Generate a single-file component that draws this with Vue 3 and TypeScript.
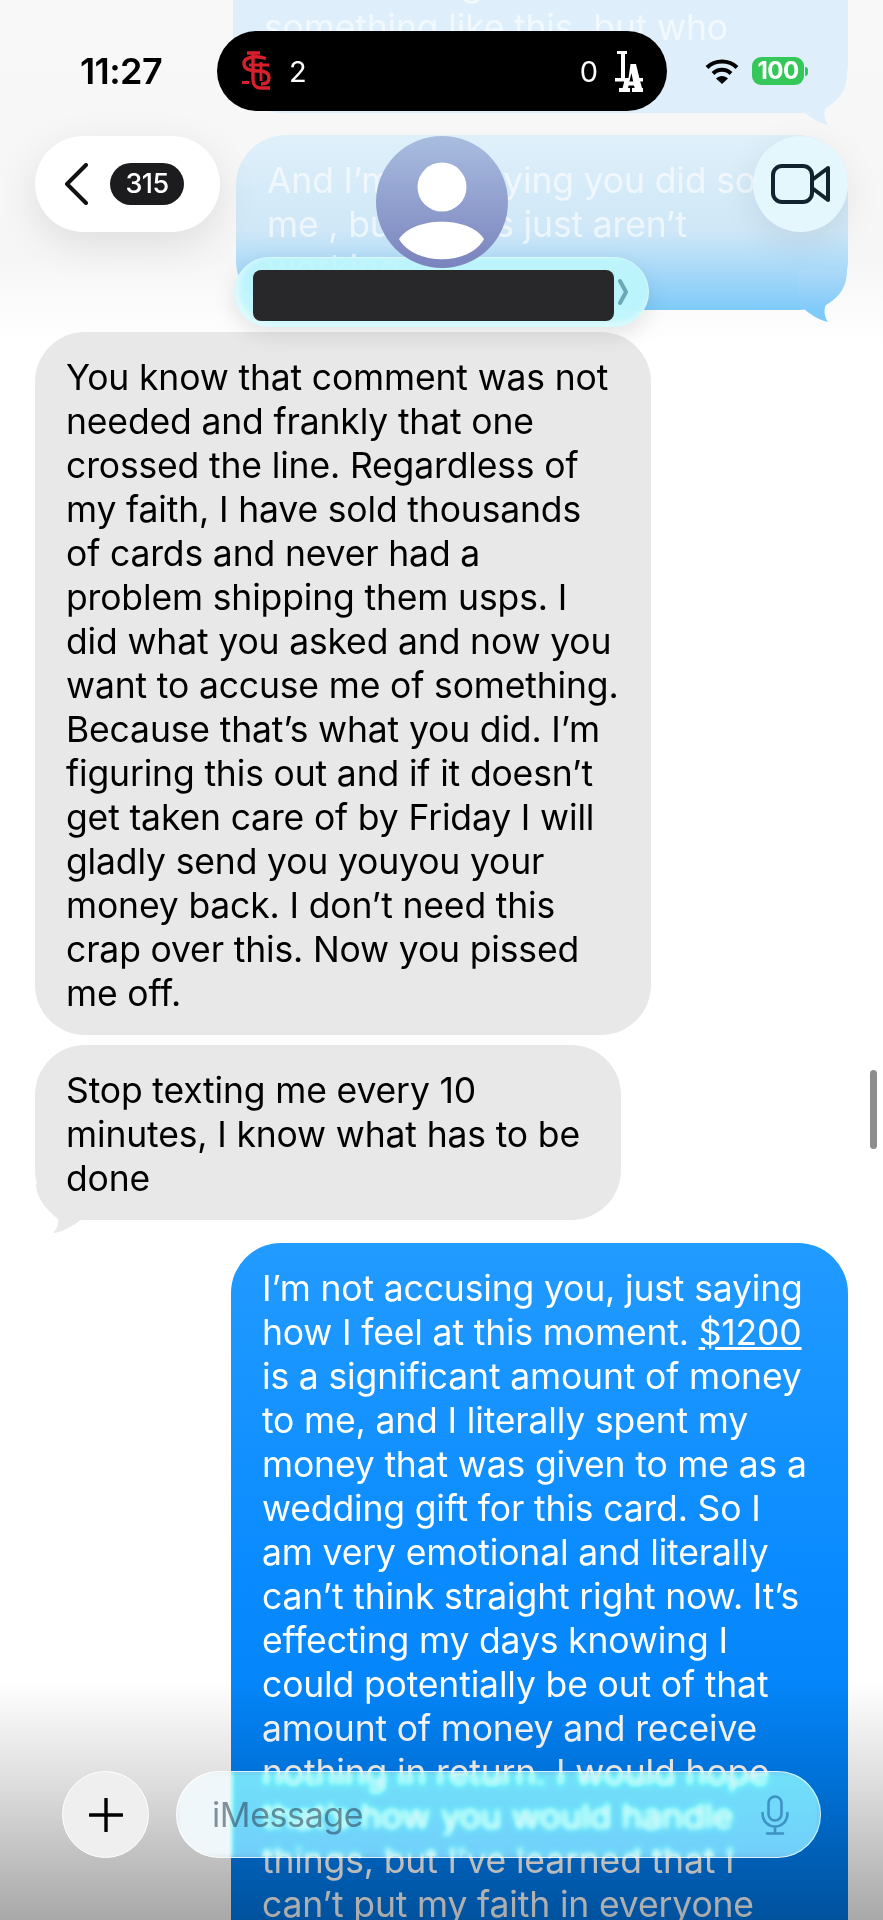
<script setup lang="ts">
interface Message {
  id: number
  from: 'me' | 'them'
  faded?: boolean
  tail?: boolean
  lines: string[]
}

const messages: Message[] = [
  {
    id: 1,
    from: 'me',
    faded: true,
    tail: true,
    lines: ['I never thought I’d be in', 'something like this, but who', 'would'],
  },
  {
    id: 2,
    from: 'me',
    faded: true,
    tail: true,
    lines: ['And I’m not saying you did so to', 'me , but things just aren’t', 'working out'],
  },
  {
    id: 3,
    from: 'them',
    lines: [
      'You know that comment was not',
      'needed and frankly that one',
      'crossed the line. Regardless of',
      'my faith, I have sold thousands',
      'of cards and never had a',
      'problem shipping them usps. I',
      'did what you asked and now you',
      'want to accuse me of something.',
      'Because that’s what you did. I’m',
      'figuring this out and if it doesn’t',
      'get taken care of by Friday I will',
      'gladly send you youyou your',
      'money back. I don’t need this',
      'crap over this. Now you pissed',
      'me off.',
    ],
  },
  {
    id: 4,
    from: 'them',
    tail: true,
    lines: ['Stop texting me every 10', 'minutes, I know what has to be', 'done'],
  },
  {
    id: 5,
    from: 'me',
    lines: [
      'I’m not accusing you, just saying',
      'how I feel at this moment. $1200',
      'is a significant amount of money',
      'to me, and I literally spent my',
      'money that was given to me as a',
      'wedding gift for this card. So I',
      'am very emotional and literally',
      'can’t think straight right now. It’s',
      'effecting my days knowing I',
      'could potentially be out of that',
      'amount of money and receive',
      'nothing in return. I would hope',
      'that’s how you would handle',
      'things, but I’ve learned that I',
      'can’t put my faith in everyone',
      'the way I did with you',
    ],
  },
]

const amount = '$1200'
const before = (line: string) => line.split(amount)[0]
</script>

<template>
  <div class="screen">
    <div class="thread">
      <div
        v-for="m in messages"
        :key="m.id"
        class="bubble"
        :class="[m.from, { faded: m.faded, 'bubble-2': m.id === 2 }]"
      >
        <span v-for="line in m.lines" :key="line" class="line">
          <template v-if="line.includes(amount)">{{ before(line) }}<u>{{ amount }}</u></template>
          <template v-else>{{ line }}</template>
        </span>
        <svg v-if="m.tail && m.from === 'me'" class="tail tail-me" viewBox="0 0 50 66">
          <defs>
            <linearGradient id="tailfade" x1="0" y1="0" x2="0" y2="1">
              <stop offset="0" stop-color="#aed9f8" />
              <stop offset="0.78" stop-color="#7fcaf9" />
            </linearGradient>
          </defs>
          <path d="M49 12C49 30 40 40 28 47C25 52 27 60 30 64C20 62 12 56 5 50H0V12Z" />
        </svg>
        <svg v-if="m.tail && m.from === 'them'" class="tail tail-them" viewBox="0 0 50 52">
          <path d="M1 0C1 14 12 26 23 35C24 41 21 46 18 49C28 48 38 42 47 35H50V0Z" />
        </svg>
      </div>
    </div>

    <div class="scrollbar"></div>

    <div class="fade-bottom"></div>

    <div class="status">
      <span class="time">11:27</span>
      <div class="island">
        <svg class="logo-stl" viewBox="0 0 30 40" fill="none" stroke="#d8202c">
          <path d="M6 2H19M12 2V29C12 34 15 37 20 37H29" stroke-width="3.4" />
          <path d="M25 7.5C15 4 3 6 3 12.5C3 19 11 20 18 20C25 20 28 23 28 27C28 31 25 33 20 33" stroke-width="3.4" />
          <path d="M1 31.5H8M8 14H28M20 11V30" stroke-width="2.8" />
        </svg>
        <span class="score">2</span>
        <span class="spacer"></span>
        <span class="score">0</span>
        <svg class="logo-la" viewBox="0 0 28 41" fill="#fff">
          <path d="M2 0H12V3H10V27H13.5L15.5 13H21L24.4 27H28V30.5H25.2L27 37H28V41H17V37H19.6L19 34.5H13.6L13 37H15V41H4V37H7.6L9.2 30.5H0V27H6V3H2ZM14.4 30.5H18.2L16.4 22Z" fill-rule="evenodd" />
        </svg>
      </div>
      <svg class="wifi" viewBox="0 0 34 26" fill="none" stroke="#000" stroke-width="4">
        <path d="M2 9.5C10 1.5 24 1.5 32 9.5" />
        <path d="M8 15.5C13 10.5 21 10.5 26 15.5" />
        <path d="M17 26L11 20.5C14.5 17 19.5 17 23 20.5Z" fill="#000" stroke="none" />
      </svg>
      <div class="battery">100</div>
      <span class="nub"></span>
    </div>

    <div class="nav">
      <button class="back">
        <svg class="chev" viewBox="0 0 24 42" fill="none" stroke="#111" stroke-width="4" stroke-linecap="round" stroke-linejoin="round">
          <path d="M22 2L3 21L22 40" />
        </svg>
        <span class="badge">315</span>
      </button>
      <button class="video">
        <svg viewBox="0 0 60 40" fill="none" stroke="#10242f" stroke-width="4" stroke-linejoin="round">
          <rect x="2" y="2" width="39" height="36" rx="9" />
          <path d="M41 16L57 4V36L41 24Z" />
        </svg>
      </button>
    </div>

    <div class="contact">
      <div class="avatar">
        <svg viewBox="0 0 132 132">
          <circle cx="66" cy="51" r="24.5" fill="#fff" />
          <path d="M23 103C38 80 94 80 108 103C94 130 38 130 23 103Z" fill="#fff" />
        </svg>
      </div>
      <div class="name">
        <div class="redacted"></div>
        <svg class="name-chev" viewBox="0 0 12 28" fill="none" stroke="#6aa8b5" stroke-width="4" stroke-linecap="round" stroke-linejoin="round">
          <path d="M3 3L9 14L3 25" />
        </svg>
      </div>
    </div>

    <div class="composer">
      <button class="plus">
        <svg viewBox="0 0 34 34" stroke="#000" stroke-width="3.4" stroke-linecap="round">
          <path d="M17 1V33M1 17H33" />
        </svg>
      </button>
      <div class="input">
        <span class="placeholder">iMessage</span>
        <svg class="mic" viewBox="0 0 28 40" fill="none" stroke="#3d93c4" stroke-width="2.6" stroke-linecap="round">
          <rect x="7.5" y="1.5" width="13" height="24" rx="6.5" />
          <path d="M1.5 18C1.5 36 26.5 36 26.5 18M14 32V38M6 38.5H22" />
        </svg>
      </div>
    </div>
  </div>
</template>

<style scoped>
.screen {
  position: relative;
  width: 883px;
  height: 1920px;
  overflow: hidden;
  background: linear-gradient(#f8f8f8, #f6f6f6 260px, #fff 345px);
  font-family: Inter, "Liberation Sans", sans-serif;
}
.thread {
  position: relative;
  z-index: 0;
  display: flex;
  flex-direction: column;
  padding: 0 35px;
  margin-top: -62px;
}
.bubble {
  position: relative;
  box-sizing: border-box;
  padding: 24px 20px 19px 31px;
  border-radius: 50px;
  font-size: 35.5px;
  line-height: 44px;
  letter-spacing: -0.15px;
  margin-bottom: 22px;
}
.line {
  position: relative;
  z-index: 1;
  display: block;
  white-space: nowrap;
}
.them {
  align-self: flex-start;
  background: #e8e8e8;
  color: #000;
  margin-bottom: 10px;
}
.them:nth-child(3) { width: 616px; }
.them:nth-child(4) { width: 586px; margin-bottom: 23px; }
.me {
  align-self: flex-end;
  width: 617px;
  color: #fff;
  background: linear-gradient(#229bff, #0a8bff 320px, #0082f7 520px, #0079ea);
}
.faded {
  width: 615px;
  background: #deeffb;
  color: rgba(255, 255, 255, 0.62);
}
.bubble-2 {
  width: 612px;
  background: linear-gradient(#dff0fa, #cfe7f7 55%, #7fcaf9);
}
.tail {
  position: absolute;
}
.tail-me {
  right: 0;
  bottom: -14px;
  width: 50px;
  height: 66px;
  fill: #deeffb;
}
.bubble-2 .tail-me { fill: url(#tailfade); }
.tail-them {
  left: 0;
  bottom: -16px;
  width: 50px;
  height: 52px;
  fill: #e8e8e8;
}
.scrollbar {
  position: absolute;
  left: 870px;
  top: 1070px;
  width: 7px;
  height: 79px;
  border-radius: 4px;
  background: #8d8d8d;
}
.fade-bottom {
  position: absolute;
  left: 0;
  right: 0;
  bottom: 0;
  height: 240px;
  background: linear-gradient(rgba(0, 0, 0, 0), rgba(0, 0, 0, 0.12) 40%, rgba(0, 0, 0, 0.34));
}
.status {
  position: absolute;
  top: 31px;
  left: 80px;
  display: flex;
  align-items: center;
  height: 80px;
}
.time {
  width: 137px;
  font-size: 36px;
  font-weight: 600;
  letter-spacing: -0.6px;
  color: #000;
}
.island {
  display: flex;
  align-items: center;
  width: 450px;
  height: 80px;
  padding: 0 24px;
  box-sizing: border-box;
  border-radius: 40px;
  background: #000;
  margin-right: 38px;
}
.logo-stl { width: 30px; height: 40px; }
.logo-la { width: 28px; height: 41px; margin-left: 17px; }
.score {
  color: #fff;
  font-size: 29px;
  margin-left: 18px;
}
.spacer { flex: 1; }
.wifi { width: 34px; height: 26px; margin-right: 13px; }
.battery {
  width: 52px;
  height: 28px;
  border-radius: 9px;
  background: #34c759;
  color: #fff;
  font-size: 24px;
  font-weight: 700;
  line-height: 28px;
  text-align: center;
  letter-spacing: -0.5px;
}
.nub {
  width: 3px;
  height: 9px;
  margin-left: 1px;
  border-radius: 0 3px 3px 0;
  background: #34c759;
}
.nav {
  position: absolute;
  top: 136px;
  left: 35px;
  right: 35px;
  display: flex;
  justify-content: space-between;
}
.back {
  display: flex;
  align-items: center;
  width: 185px;
  height: 96px;
  padding: 0 0 0 29px;
  border: none;
  border-radius: 48px;
  background: #fff;
  box-shadow: 0 12px 40px rgba(0, 0, 0, 0.1);
}
.chev { width: 24px; height: 42px; }
.badge {
  width: 74px;
  height: 42px;
  margin-left: 22px;
  border-radius: 21px;
  background: #1c1c1e;
  color: #fff;
  font: 500 27px/42px Inter, sans-serif;
  letter-spacing: -0.6px;
  text-align: center;
}
.video {
  display: flex;
  align-items: center;
  justify-content: center;
  width: 95px;
  height: 96px;
  padding: 0;
  border: none;
  border-radius: 50%;
  background: #e4f7fd;
  box-shadow: 0 10px 36px rgba(0, 0, 0, 0.08);
}
.video svg { width: 60px; height: 40px; }
.contact {
  position: absolute;
  top: 136px;
  left: 234px;
  width: 415px;
  display: flex;
  flex-direction: column;
  align-items: center;
}
.avatar {
  position: relative;
  z-index: 1;
  width: 132px;
  height: 132px;
  border-radius: 50%;
  overflow: hidden;
  background: linear-gradient(#a9bde0, #7a83bd);
}
.avatar svg { display: block; width: 132px; height: 132px; }
.name {
  display: flex;
  align-items: center;
  box-sizing: border-box;
  width: 415px;
  height: 70px;
  margin-top: -11px;
  padding: 6px 0 0 18px;
  border-radius: 35px;
  background: rgba(190, 245, 252, 0.95);
  border: 1px solid #d5f9fd;
  box-shadow: 0 8px 22px rgba(0, 0, 0, 0.1), inset 3px -3px 6px rgba(255, 255, 255, 0.6);
}
.redacted {
  width: 361px;
  height: 51px;
  border-radius: 8px;
  background: #28282a;
}
.name-chev { width: 12px; height: 28px; margin-left: 3px; margin-top: -6px; }
.composer {
  position: absolute;
  top: 1771px;
  left: 62px;
  display: flex;
  gap: 27px;
}
.plus {
  display: flex;
  align-items: center;
  justify-content: center;
  width: 87px;
  height: 87px;
  padding: 0;
  border: 1px solid #fff;
  border-radius: 50%;
  background: #efefef;
}
.plus svg { width: 34px; height: 34px; }
.input {
  display: flex;
  align-items: center;
  justify-content: space-between;
  box-sizing: border-box;
  width: 645px;
  height: 87px;
  padding: 0 31px 0 35px;
  border: 1px solid rgba(255, 255, 255, 0.75);
  border-radius: 44px;
  background: rgba(225, 240, 245, 0.5);
  -webkit-backdrop-filter: blur(3px) saturate(1.3) brightness(1.75);
  backdrop-filter: blur(3px) saturate(1.3) brightness(1.75);
}
.placeholder {
  font-size: 34px;
  letter-spacing: -0.4px;
  color: rgba(40, 60, 80, 0.55);
}
.mic { width: 28px; height: 40px; }
</style>
